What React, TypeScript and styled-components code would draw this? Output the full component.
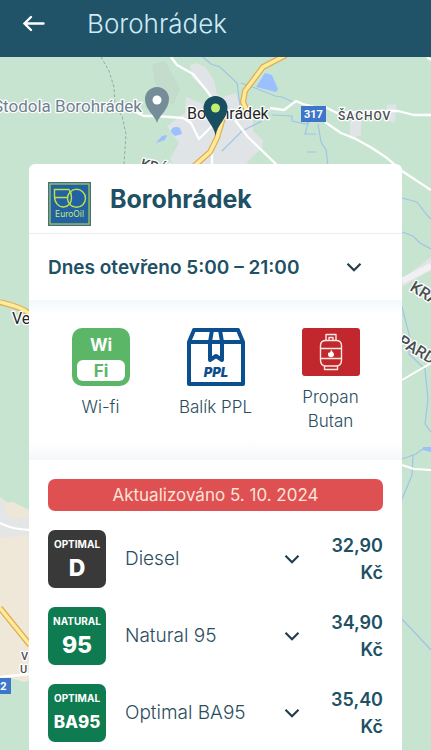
import React from "react";
import styled, { createGlobalStyle } from "styled-components";

const GlobalStyle = createGlobalStyle`
  *, *::before, *::after { box-sizing: border-box; }
  body {
    margin: 0;
    background: #c7e4d1;
    color: #2a4d5e;
    font-family: Inter, "Open Sans", sans-serif;
    overflow: hidden;
  }
  h1, h2, p, ul { margin: 0; padding: 0; }
  ul { list-style: none; }
  button { font: inherit; color: inherit; background: none; border: 0; padding: 0; cursor: pointer; }
`;

const Page = styled.div`
  min-height: 100vh;
  display: flex;
  flex-direction: column;
`;

const Header = styled.header`
  display: flex;
  align-items: center;
  gap: 40px;
  height: 57px;
  padding: 0 20px 10px;
  background: #205368;
`;

const BackButton = styled.button`
  display: flex;
  color: #ffffff;
`;

const HeaderTitle = styled.h1`
  font-size: 26px;
  line-height: 32px;
  font-weight: 300;
  color: #cfeaf5;
`;

const MapArea = styled.main`
  position: relative;
  flex: 1;
  display: flex;
  flex-direction: column;
  padding: 107px 29px 0;
  overflow: hidden;
`;

const MapCanvas = styled.svg`
  position: absolute;
  inset: 0;
  width: 100%;
  height: 100%;
`;

const Card = styled.article`
  position: relative;
  flex: 1;
  background: #ffffff;
  border-radius: 6px 6px 0 0;
`;

const CardHead = styled.div`
  display: flex;
  align-items: flex-start;
  gap: 19px;
  padding: 18px 19px 7px;
  border-bottom: 1px solid #e8edf0;
`;

const StationName = styled.h2`
  font-size: 25px;
  line-height: 34px;
  font-weight: 700;
  color: #205064;
`;

const HoursButton = styled.button`
  display: flex;
  align-items: center;
  justify-content: space-between;
  width: 100%;
  height: 66px;
  padding: 0 40px 0 19px;
  font-size: 19px;
  font-weight: 600;
  color: #205064;
`;

const Services = styled.ul`
  display: grid;
  grid-template-columns: repeat(3, 1fr);
  padding: 28px 14px 27px;
  background: linear-gradient(#f3f8fb, #ffffff 14px, #ffffff 140px, #f5f8fb);
`;

const Service = styled.li`
  display: flex;
  flex-direction: column;
  align-items: center;
  gap: 9px;
  font-size: 17px;
  line-height: 24px;
  font-weight: 300;
  text-align: center;
`;

const ServiceLabel = styled.span`
  max-width: 80px;
`;

const Prices = styled.section`
  display: flex;
  flex-direction: column;
  gap: 19px;
  padding: 19px 19px 8px;
`;

const Updated = styled.p`
  border-radius: 7px;
  background: #df5052;
  color: #fbe3d6;
  font-size: 17px;
  line-height: 32px;
  font-weight: 400;
  text-align: center;
`;

const FuelList = styled.ul`
  display: flex;
  flex-direction: column;
  gap: 19px;
`;

const FuelRow = styled.li`
  display: grid;
  grid-template-columns: 58px 1fr 16px 83px;
  align-items: center;
  height: 58px;
`;

const FuelTile = styled.div<{ $color: string }>`
  display: flex;
  flex-direction: column;
  align-items: center;
  height: 58px;
  padding-top: 7px;
  border-radius: 7px;
  background: ${(p) => p.$color};
  color: #ffffff;
`;

const TileBrand = styled.span`
  font-size: 10px;
  line-height: 14px;
  font-weight: 700;
`;

const TileGrade = styled.span<{ $long?: boolean }>`
  font-size: ${(p) => (p.$long ? 17 : 23)}px;
  line-height: 34px;
  font-weight: 800;
`;

const FuelName = styled.span`
  padding-left: 19px;
  font-size: 19px;
  line-height: 26px;
  font-weight: 300;
`;

const ExpandButton = styled.button`
  display: flex;
  justify-content: center;
  height: 24px;
  align-items: center;
  color: #203f4e;
`;

const Price = styled.strong`
  padding-left: 24px;
  font-size: 18px;
  line-height: 27px;
  font-weight: 600;
  text-align: right;
  color: #205064;
`;

const Chevron = () => (
  <svg width="16" height="16" viewBox="0 0 16 16" fill="none" stroke="#203f4e" strokeWidth="2.2" aria-hidden="true">
    <path d="M1.5 4.8 8 11.2l6.500-6.400" />
  </svg>
);

const BackArrow = () => (
  <svg width="27" height="24" viewBox="0 0 27 24" fill="none" stroke="currentColor" strokeWidth="2.4" strokeLinecap="round" aria-hidden="true">
    <path d="M23.500 11.500H4.500M11 5 4.500 11.500l6.500 6.500" />
  </svg>
);

const EuroOilLogo = () => (
  <svg width="43" height="44" viewBox="0 0 43 44" role="img" aria-label="EuroOil">
    <rect width="43" height="44" fill="#42708a" />
    <rect x="2" y="2" width="39" height="40" fill="#2262a0" stroke="#a8cc58" strokeWidth="1.200" />
    <g fill="none" stroke="#bfe04c" strokeWidth="1.400">
      <path d="M21 7.500H6.500V14c0 7 4 11 9 11 5 0 8-4 8-9.500 0-3-.5-5.500-2.500-8M6.500 15.500H19" />
      <ellipse cx="28.500" cy="16.300" rx="9" ry="9" />
    </g>
    <text x="21.500" y="35" textAnchor="middle" fontFamily="Inter, sans-serif" fontSize="8.500" fill="#cbe67a">EuroOil</text>
  </svg>
);

const WifiIcon = () => (
  <svg width="58" height="58" viewBox="0 0 58 58" aria-hidden="true">
    <rect width="58" height="58" rx="10" fill="#5cb668" />
    <rect x="5" y="32" width="48" height="21" rx="6" fill="#ffffff" />
    <g fontFamily="Inter, sans-serif" fontSize="17" fontWeight="700" textAnchor="middle">
      <text x="29" y="23" fill="#ffffff">Wi</text>
      <text x="29" y="49" fill="#5cb668">Fi</text>
    </g>
  </svg>
);

const ParcelIcon = () => (
  <svg width="58" height="58" viewBox="0 0 58 58" aria-hidden="true">
    <g fill="none" stroke="#0b4f8f" strokeWidth="4" strokeLinejoin="round">
      <path d="M2 14v42h54V14L51 2H7z" />
      <path d="M2 14h54" />
      <path d="M25 2 23 14v18l6-4 6 4V14L33 2" />
    </g>
    <text x="29" y="49" textAnchor="middle" fontFamily="Inter, sans-serif" fontSize="13" fontWeight="900" fontStyle="italic" fill="#0b4f8f">PPL</text>
  </svg>
);

const GasIcon = () => (
  <svg width="58" height="48" viewBox="0 0 58 48" aria-hidden="true">
    <rect width="58" height="48" rx="3" fill="#c1272d" />
    <g fill="none" stroke="#fbe9e6" strokeWidth="1.400" strokeLinejoin="round">
      <path d="M24 12.500V6.500h10v6M27 12v-2.500h4V12" />
      <path d="M24 12.500h10c3.500 0 5.500 2 5.500 5V32c0 3.500-2 6-5.500 6H24c-3.500 0-5.500-2.500-5.500-6V17.500c0-3 2-5 5.500-5z" />
      <path d="M18.500 20.500h21M18.500 30.500h21M22.500 38v3.500h13V38" />
    </g>
    <path d="M29 21.500c.5 2 3 2.800 3 4.800a3 3 0 0 1-6 0c0-1 .6-1.700 1.200-2.200l.6 1c.8-1 .8-2.200 1.200-3.600z" fill="#ffffff" />
  </svg>
);

const StationMap = () => (
  <MapCanvas viewBox="0 57 431 693" preserveAspectRatio="xMidYMin slice" aria-hidden="true">
    <rect y="57" width="431" height="693" fill="#c7e4d1" />
    <path d="M0 497 8 503l20 8 20 5v160l-24 6-24-7z" fill="#efe8d9" />
    <path d="m0 499 6 4 14 4 15 10v17L0 538z" fill="#e3e5e6" />
    <path d="m5 503 8-1 20 10v6l-20 1-8-6z" fill="#eee6d6" />
    <path d="m152 65 13-4 15 28-7 17-18-23z" fill="#c3dccc" />
    <g fill="#e1e4e6">
      <path d="m190 65 6-2 9 4 9 13 3 14 6 3 13-4 4 14 13 9v15l10 9-1 8-9 8-7 7 24 6 7 9-1 13h-76l-21-16-9-16 9-16-12-17 18-13 1-16 17 7 9-2-3-9-17-16z" />
      <path d="m350 121 11-2v16l-11 4zM387 105l9-1-1 19-9-3z" />
      <path d="m402 279 29-22v13l-29 17z" />
    </g>
    <g fill="#9bbfff">
      <path d="m256 87 9-14 7 2 6 14-2 3z" />
      <path d="m156 143 6-7 5-1-2 5zM171 132c0-5 5-6 9-4l2 6-7 2z" />
      <path d="M423 447h8v5l-8-2z" />
    </g>
    <g fill="none" stroke="#a1c4e5" strokeWidth="1.200">
      <path d="m203 57 8 7 9 3 17 16 3 22M241 83l14 5 20 8 7 1 11 5" />
      <path d="m222 151 20-20 20-10M272 115l20 1v5l14 3 3-3-4 13h11M318 124l3 18 5 8 2 16M307 152h9" />
      <path d="m402 198 15 4 10 13 4 4M402 232l11 4 7 7 11 6M402 307l8 31-1 16 16 15 3 30-3 25 6 8M402 459l14-5 8-6M413 455l-1 20-12 29M402 619l29 31" />
    </g>
    <g fill="none" stroke="#ffffff" strokeLinejoin="round" strokeWidth="2.300">
      <path d="m171 57 6 8 16 9 14 17 9 13M136 112l8 4 12 0 27 2 8 5 8 16 14-14M235 120l13 17 30 29M212 165v-14M270 108l14 2 12-9 7 3 20 5M325 107l12 6 40-2 21 0 16 4h17M325 122l16 11 15 6 16 9 15 10 15 13 29 19M427 57l4 3M0 523c10 5 16 6 29 7M0 677l29-3" />
      <path d="m402 281 29-15" stroke="#f1f1f3" strokeWidth="6" />
      <path d="m402 380 29-17M402 465l12 4 17 1" strokeWidth="2" />
    </g>
    <path d="m101 57 8 14 5 16 1 20 7 9 4 18-2 31" fill="none" stroke="#93aaa3" strokeDasharray="3 2" />
    <g fill="none" strokeLinejoin="round">
      <g stroke="#dfae57" strokeWidth="6">
        <path d="m286 55-23 12-18 24-2 11 5 11M223 118l-6 20-7 14-18 16M0 302c10 3 20 4 30 12M0 608l30 37" />
      </g>
      <g stroke="#ffeb9a" strokeWidth="3.500">
        <path d="m286 55-23 12-18 24-2 11 5 11M223 118l-6 20-7 14-18 16M0 302c10 3 20 4 30 12M0 608l30 37" />
      </g>
    </g>
    <g fontFamily="Roboto, sans-serif" stroke="#ffffff" strokeWidth="2.500" strokeLinejoin="round" paintOrder="stroke">
      <text x="-7" y="112" fontSize="17" fill="#6f8190">Stodola Borohrádek</text>
      <text x="187" y="119" fontSize="16" fill="#242628">Borohrádek</text>
      <text x="338" y="120" fontSize="12" fontWeight="500" letterSpacing="1" fill="#4a4f52">ŠACHOV</text>
      <text x="12" y="324" fontSize="16" fill="#242628">Ve</text>
      <g fontSize="16" fontWeight="500" fill="#4a4f52">
        <text transform="translate(140 168) rotate(13)" fontSize="14">KRÁL</text>
        <text transform="translate(409 290) rotate(31)">KRA</text>
        <text transform="translate(397 344) rotate(31)">PARD</text>
      </g>
      <g fontSize="11" fontWeight="500" fill="#4a4f52">
        <text x="21" y="660">V</text>
        <text x="20" y="673">U</text>
      </g>
    </g>
    <g fill="#3e76c9">
      <rect x="301" y="106" width="25" height="16" />
      <rect x="-12" y="678" width="23" height="16" />
    </g>
    <g fontFamily="Roboto, sans-serif" fontSize="11" fontWeight="700" fill="#ffffff">
      <text x="304" y="118">317</text>
      <text x="-6" y="690">22</text>
    </g>
    <path d="M157 123c-2-8-12-13-12-24a12 12 0 0 1 24 0c0 11-10 16-12 24z" fill="#748d99" />
    <circle cx="157" cy="100" r="4.500" fill="#ffffff" />
    <path d="M215.500 136c-1-11-12-17-12-28a12 12 0 0 1 24 0c0 11-11 17-12 28z" fill="#194e60" />
    <circle cx="215.500" cy="108" r="4.500" fill="#c1ed70" />
  </MapCanvas>
);

const services = [
  { label: "Wi-fi", icon: <WifiIcon /> },
  { label: "Balík PPL", icon: <ParcelIcon /> },
  { label: "Propan Butan", icon: <GasIcon /> },
];

const fuels = [
  { brand: "OPTIMAL", grade: "D", name: "Diesel", price: "32,90 Kč", color: "#393939" },
  { brand: "NATURAL", grade: "95", name: "Natural 95", price: "34,90 Kč", color: "#0e7b50" },
  { brand: "OPTIMAL", grade: "BA95", name: "Optimal BA95", price: "35,40 Kč", color: "#0e7b50" },
];

export default function App() {
  return (
    <Page>
      <GlobalStyle />
      <Header>
        <BackButton type="button" aria-label="Zpět"><BackArrow /></BackButton>
        <HeaderTitle>Borohrádek</HeaderTitle>
      </Header>
      <MapArea>
        <StationMap />
        <Card>
          <CardHead>
            <EuroOilLogo />
            <StationName>Borohrádek</StationName>
          </CardHead>
          <HoursButton type="button" aria-expanded="false">
            Dnes otevřeno 5:00 – 21:00
            <Chevron />
          </HoursButton>
          <Services>
            {services.map((s) => (
              <Service key={s.label}>
                {s.icon}
                <ServiceLabel>{s.label}</ServiceLabel>
              </Service>
            ))}
          </Services>
          <Prices>
            <Updated>Aktualizováno 5. 10. 2024</Updated>
            <FuelList>
              {fuels.map((f) => (
                <FuelRow key={f.name}>
                  <FuelTile $color={f.color}>
                    <TileBrand>{f.brand}</TileBrand>
                    <TileGrade $long={f.grade.length > 2}>{f.grade}</TileGrade>
                  </FuelTile>
                  <FuelName>{f.name}</FuelName>
                  <ExpandButton type="button" aria-label={f.name} aria-expanded="false"><Chevron /></ExpandButton>
                  <Price>{f.price}</Price>
                </FuelRow>
              ))}
            </FuelList>
          </Prices>
        </Card>
      </MapArea>
    </Page>
  );
}
